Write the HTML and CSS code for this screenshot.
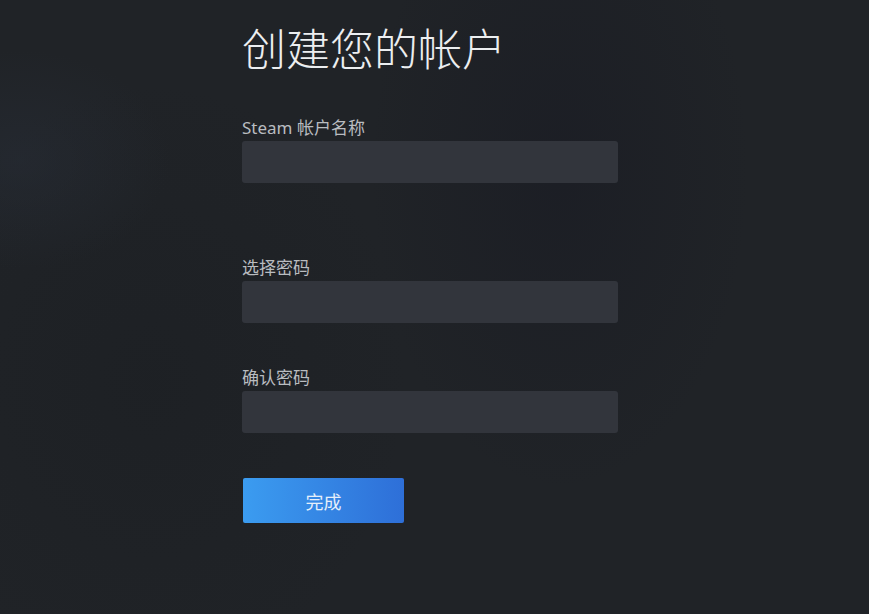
FILE: index.html
```html
<!DOCTYPE html>
<html>
<head>
	<title>创建您的帐户</title>
	<meta charset="utf-8"/>
	<link rel="stylesheet" href="styles.css">
</head>
<body>

<div id="backdrop"></div>
<div id="page">
	<h1>创建您的帐户</h1>
	<form class="signup">
		<div class="field first">
			<label for="account">Steam 帐户名称</label>
			<input id="account" type="text">
		</div>
		<div class="field">
			<label for="pass">选择密码</label>
			<input id="pass" type="password">
		</div>
		<div class="field">
			<label for="pass2">确认密码</label>
			<input id="pass2" type="password">
		</div>
		<button type="button">完成</button>
	</form>
</div>

</body>
</html>
```

FILE: styles.css
```css
* {
	box-sizing: border-box;
}

body {
	margin: 0;
	height: 614px;
	overflow: hidden;
	background: #202327;
	font-family: "Noto Sans", "Noto Sans CJK SC", sans-serif;
	position: relative;
}

#backdrop {
	position: absolute;
	left: 0;
	top: 0;
	width: 100%;
	height: 100%;
	pointer-events: none;
	background:
		radial-gradient(ellipse 150px 110px at 20px 160px, rgba(40,46,56,0.5) 0%, rgba(40,46,56,0) 100%),
		radial-gradient(ellipse 190px 320px at 560px 170px, rgba(26,28,36,0.7) 0%, rgba(26,28,36,0) 100%),
		radial-gradient(ellipse 260px 300px at 150px 380px, rgba(27,30,34,0.5) 0%, rgba(27,30,34,0) 100%);
}

#page {
	position: relative;
	padding: 27px 0 0 242px;
}

h1 {
	margin: 0 0 47px;
	font-size: 44px;
	line-height: 44px;
	font-weight: 300;
	color: #eceef0;
}

.signup {
	display: flex;
	flex-direction: column;
	align-items: flex-start;
	gap: 45px;
}

.field {
	display: flex;
	flex-direction: column;
	gap: 3px;
	width: 376px;
}

.field.first {
	margin-bottom: 30px;
}

label {
	font-size: 17px;
	line-height: 20px;
	color: #b9bcc0;
}

input {
	height: 42px;
	border: none;
	border-radius: 3px;
	background: #32353c;
	color: #fff;
	outline: none;
	padding: 0 12px;
	font-size: 16px;
}

button {
	width: 161px;
	height: 45px;
	margin-left: 1px;
	border: none;
	border-radius: 2px;
	background: linear-gradient(90deg, #3b9cf0 0%, #2e6fd8 100%);
	color: #e6effa;
	font-family: inherit;
	font-size: 18px;
}
```
